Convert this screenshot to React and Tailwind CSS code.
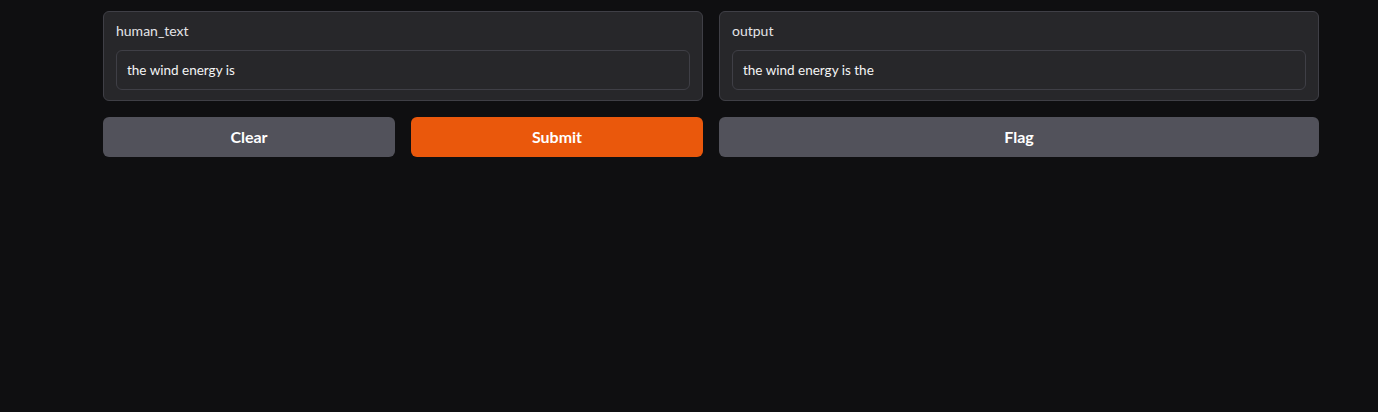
const FONT = { fontFamily: 'Lato, "Open Sans", sans-serif' }

function TextBlock({ label, value }) {
  return (
    <div className="flex-1 rounded-md border border-[#3f3f46] bg-[#27272a] px-3 pt-[9px] pb-[10px]">
      <p className="text-sm leading-5 text-[#e4e4e7]">{label}</p>
      <div className="mt-[9px] flex h-10 items-center rounded-md border border-[#3f3f46] bg-[#27272a] px-[10px]">
        <span className="text-[13.5px] text-[#f4f4f5]">{value}</span>
      </div>
    </div>
  )
}

function Button({ children, primary }) {
  return (
    <button
      className={`h-10 flex-1 rounded-md text-base font-bold text-white ${
        primary ? 'bg-[#ea580c]' : 'bg-[#52525b]'
      }`}
    >
      {children}
    </button>
  )
}

export default function App() {
  return (
    <div className="min-h-[412px] w-full bg-[#0f0f11] pl-[103px] pt-[11px]" style={FONT}>
      <div className="flex w-[1216px] gap-4">
        {/* inputs */}
        <div className="flex flex-1 flex-col gap-4">
          <TextBlock label="human_text" value="the wind energy is" />
          <div className="flex gap-4">
            <Button>Clear</Button>
            <Button primary>Submit</Button>
          </div>
        </div>

        {/* outputs */}
        <div className="flex flex-1 flex-col gap-4">
          <TextBlock label="output" value="the wind energy is the" />
          <div className="flex">
            <Button>Flag</Button>
          </div>
        </div>
      </div>
    </div>
  )
}
